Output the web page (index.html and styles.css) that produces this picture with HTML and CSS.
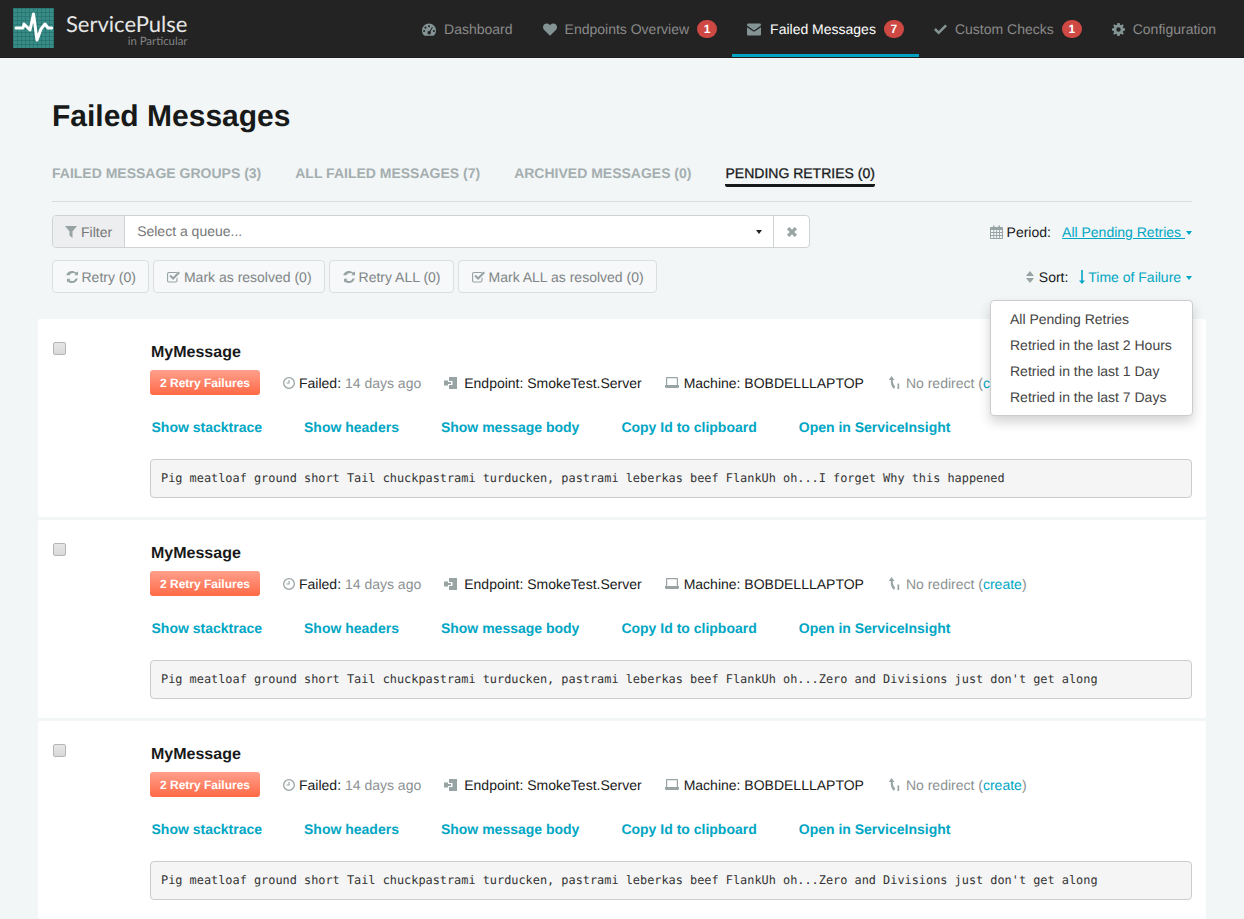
FILE: index.html
```html
<!DOCTYPE html>
<html>
<head>
    <meta name="viewport" content="width=device-width, initial-scale=1">
    <title>ServicePulse</title>
    <link rel="stylesheet" href="styles.css">
</head>
<body>
<svg class="defs" width="0" height="0">
    <symbol id="i-gauge" viewBox="0 0 16 14"><path fill-rule="evenodd" d="M8 0a8 8 0 0 0-8 8c0 2 .7 3.900 2 5.300.3.400.7.700 1.200.700h9.600c.5 0 .9-.3 1.200-.7 1.300-1.400 2-3.300 2-5.300a8 8 0 0 0-8-8zM8 2a1.200 1.200 0 1 1 0 2.400A1.200 1.200 0 0 1 8 2zM4 3.700a1.200 1.200 0 1 1 0 2.400 1.200 1.200 0 0 1 0-2.400zM2.400 7.500a1.200 1.200 0 1 1 0 2.400 1.200 1.200 0 0 1 0-2.400zM13.600 7.500a1.200 1.200 0 1 1 0 2.400 1.200 1.200 0 0 1 0-2.400zM11.400 4l1 .6-2.700 4.700a2 2 0 1 1-1-.6z"/></symbol>
    <symbol id="i-heart" viewBox="0 0 16 14"><path d="M8 14 1.300 7.500C-.4 5.800-.4 3 1.200 1.300 2.900-.4 5.600-.4 7.300 1.300l.7.700.7-.7c1.700-1.700 4.400-1.700 6.100 0 1.600 1.700 1.600 4.500-.1 6.200z"/></symbol>
    <symbol id="i-mail" viewBox="0 0 14 12"><path d="M1.300 0h11.400C13.400 0 14 .6 14 1.300c0 .5-.3 1-.7 1.300L7.700 6.400a1.200 1.200 0 0 1-1.400 0L.7 2.600C.3 2.300 0 1.800 0 1.300 0 .6.600 0 1.300 0zM0 3.700 6 7.800c.6.400 1.400.4 2 0l6-4.100v7c0 .7-.6 1.300-1.300 1.300H1.300C.6 12 0 11.400 0 10.700z"/></symbol>
    <symbol id="i-check" viewBox="0 0 14 11"><path d="M5 11 0 6l2-2 3 3 7-7 2 2z"/></symbol>
    <symbol id="i-cog" viewBox="0 0 14 14"><path fill-rule="evenodd" d="M5.800 0h2.400l.4 1.900 1.200.5L11.400 1.300l1.300 1.300-1.100 1.600.5 1.200L14 5.800v2.400l-1.900.4-.5 1.200 1.100 1.600-1.300 1.300-1.600-1.100-1.200.5L8.200 14H5.800l-.4-1.900-1.200-.5-1.600 1.100-1.300-1.300 1.100-1.600-.5-1.200L0 8.200V5.800l1.900-.4.500-1.200-1.100-1.600 1.300-1.300 1.600 1.100 1.200-.5zM7 4.600a2.400 2.400 0 1 0 0 4.800 2.400 2.400 0 0 0 0-4.800z"/></symbol>
    <symbol id="i-filter" viewBox="0 0 12 12"><path d="M0 0h12L7.500 5.500V12L4.500 9.500v-4z"/></symbol>
    <symbol id="i-times" viewBox="0 0 10 10"><path d="M2.200 0 5 2.800 7.800 0 10 2.200 7.200 5 10 7.800 7.800 10 5 7.200 2.200 10 0 7.800 2.800 5 0 2.200z"/></symbol>
    <symbol id="i-refresh" viewBox="0 0 12 12"><path d="M11.800 7.200C11.200 10 8.900 12 6 12c-1.500 0-3-.6-4-1.600L1 11.400V7.700h3.700L3.300 9.100c.7.600 1.700 1 2.700 1 1.500 0 2.800-.9 3.400-2.400zM12 .6v3.700H8.300l1.400-1.400C9 2.300 8 1.900 6.900 1.900c-1.500 0-3 .9-3.500 2.400H.2C.8 1.900 3.100 0 6 0c1.500 0 3 .6 4 1.600z"/></symbol>
    <symbol id="i-checkbox" viewBox="0 0 13 12"><path fill-rule="evenodd" d="M1.800 1h8c.3 0 .5 0 .7.100l-.8 1H2c-.5 0-.9.400-.9.900v6.500c0 .5.400.9.900.9h6.500c.5 0 .9-.4.900-.9V7.400l1.100-1.100v3.200c0 1.100-.9 2-2 2H1.800c-1 0-1.800-.9-1.800-2V3c0-1.100.8-2 1.800-2zM11.500.6 13 2 6.100 8.900 2.400 5.200l1.400-1.400 2.300 2.300z"/></symbol>
    <symbol id="i-calendar" viewBox="0 0 13 14"><path fill-rule="evenodd" d="M1 2h2V.5h1.500V2h4V.5H10V2h2c.6 0 1 .4 1 1v10c0 .6-.4 1-1 1H1c-.6 0-1-.4-1-1V3c0-.6.400-1 1-1zM1 5v2h2.300V5zm3.200 0v2h2V5zm2.900 0v2h2V5zm2.900 0v2H12V5zM1 8v2h2.300V8zm3.200 0v2h2V8zm2.900 0v2h2V8zm2.900 0v2H12V8zM1 11v2h2.300v-2zm3.200 0v2h2v-2zm2.900 0v2h2v-2zm2.900 0v2H12v-2z"/></symbol>
    <symbol id="i-sort" viewBox="0 0 8 12"><path d="M4 0l4 5H0zM0 7h8l-4 5z"/></symbol>
    <symbol id="i-down" viewBox="0 0 6 14"><path d="M2.200 0h1.600v10.500H6L3 14 0 10.500h2.200z"/></symbol>
    <symbol id="i-clock" viewBox="0 0 12 12"><path fill-rule="evenodd" d="M6 0a6 6 0 1 1 0 12A6 6 0 0 1 6 0zm0 1.300a4.700 4.700 0 1 0 0 9.400 4.700 4.700 0 0 0 0-9.400zM5.500 3h1.100v3.500H3.500V5.500h2z"/></symbol>
    <symbol id="i-endpoint" viewBox="0 0 13 12"><path d="M5 0h8v12H5V8h3.500V4H5zM0 3.500h4V5h3v2H4v1.500H0z"/></symbol>
    <symbol id="i-laptop" viewBox="0 0 14 11"><path fill-rule="evenodd" d="M2 0h10c.5 0 1 .5 1 1v7h1v1.500c0 .8-.6 1.500-1.300 1.500H1.300C.6 11 0 10.300 0 9.500V8h1V1c0-.5.500-1 1-1zm.2 1.200V8h9.600V1.200z"/></symbol>
    <symbol id="i-redirect" viewBox="0 0 12 14"><path d="M3.500 0 6.500 4H4.800c-.2 3 .8 5 2.400 6.500L6 13C3.500 11 2.600 8 2.800 4H.8zM9.500 7.500h1.700V13H9.500z"/></symbol>
</svg>

<header class="navbar">
    <a class="brand" href="#">
        <svg class="brand-mark" viewBox="0 0 41 40">
            <defs>
                <pattern id="grid" width="4" height="4" patternUnits="userSpaceOnUse">
                    <rect width="4" height="4" fill="#388c88"/>
                    <path d="M0 0h4M0 0v4" stroke="#1f6664" stroke-width="1"/>
                </pattern>
            </defs>
            <rect width="41" height="40" fill="url(#grid)"/>
            <path d="M3 20h7l1-4 6 6 3.500-16L24 32l4-11 4-5 3 4h3.700" fill="none" stroke="#fff" stroke-width="3" stroke-linejoin="round" stroke-linecap="round"/>
        </svg>
        <span class="brand-text">
            <span class="brand-name">ServicePulse</span>
            <span class="brand-sub">in Particular</span>
        </span>
    </a>
    <nav class="nav">
        <a class="nav-item" href="#"><svg class="nav-icon"><use href="#i-gauge"/></svg>Dashboard</a>
        <a class="nav-item" href="#"><svg class="nav-icon"><use href="#i-heart"/></svg>Endpoints Overview<span class="count">1</span></a>
        <a class="nav-item active" href="#"><svg class="nav-icon wide-gap"><use href="#i-mail"/></svg>Failed Messages<span class="count">7</span></a>
        <a class="nav-item" href="#"><svg class="nav-icon narrow"><use href="#i-check"/></svg>Custom Checks<span class="count">1</span></a>
        <a class="nav-item" href="#"><svg class="nav-icon narrow"><use href="#i-cog"/></svg>Configuration</a>
    </nav>
</header>

<main class="page">
    <h1>Failed Messages</h1>

    <div class="tabs">
        <a class="tab" href="#">Failed Message Groups (3)</a>
        <a class="tab" href="#">All Failed Messages (7)</a>
        <a class="tab" href="#">Archived Messages (0)</a>
        <a class="tab selected" href="#">Pending Retries (0)</a>
    </div>

    <div class="toolbar">
        <div class="filter">
            <span class="filter-label"><svg class="ico i12"><use href="#i-filter"/></svg>Filter</span>
            <span class="filter-select">Select a queue...<span class="caret dark"></span></span>
            <span class="filter-clear"><svg class="ico i10"><use href="#i-times"/></svg></span>
        </div>
        <div class="period">
            <svg class="ico calendar"><use href="#i-calendar"/></svg><span class="label period-label">Period:</span>
            <a class="period-link" href="#">All Pending Retries <span class="caret"></span></a>
        </div>
    </div>

    <div class="toolbar second">
        <div class="actions">
            <button class="btn"><svg class="ico i12"><use href="#i-refresh"/></svg>Retry (0)</button>
            <button class="btn"><svg class="ico i13"><use href="#i-checkbox"/></svg>Mark as resolved (0)</button>
            <button class="btn"><svg class="ico i12"><use href="#i-refresh"/></svg>Retry ALL (0)</button>
            <button class="btn"><svg class="ico i13"><use href="#i-checkbox"/></svg>Mark ALL as resolved (0)</button>
        </div>
        <div class="sort">
            <svg class="ico sort-ico"><use href="#i-sort"/></svg><span class="label">Sort:</span>
            <a class="sort-link" href="#"><svg class="down-ico"><use href="#i-down"/></svg>Time of Failure <span class="caret"></span></a>
        </div>
    </div>

    <ul class="menu">
        <li>All Pending Retries</li>
        <li>Retried in the last 2 Hours</li>
        <li>Retried in the last 1 Day</li>
        <li>Retried in the last 7 Days</li>
    </ul>

    <div class="messages">
        <div class="message">
            <input class="pick" type="checkbox">
            <div class="body">
                <div class="title">MyMessage</div>
                <div class="meta">
                    <span class="badge">2 Retry Failures</span>
                    <span class="meta-item"><svg class="ico i12"><use href="#i-clock"/></svg>Failed: <span class="muted">14 days ago</span></span>
                    <span class="meta-item"><svg class="ico endpoint"><use href="#i-endpoint"/></svg>Endpoint: SmokeTest.Server</span>
                    <span class="meta-item"><svg class="ico laptop"><use href="#i-laptop"/></svg>Machine: BOBDELLLAPTOP</span>
                    <span class="meta-item muted"><svg class="ico redirect"><use href="#i-redirect"/></svg>No redirect (<a href="#">create</a>)</span>
                </div>
                <div class="links">
                    <a href="#">Show stacktrace</a>
                    <a href="#">Show headers</a>
                    <a href="#">Show message body</a>
                    <a href="#">Copy Id to clipboard</a>
                    <a href="#">Open in ServiceInsight</a>
                </div>
                <pre class="reason">Pig meatloaf ground short Tail chuckpastrami turducken, pastrami leberkas beef FlankUh oh...I forget Why this happened</pre>
            </div>
        </div>
        <div class="message">
            <input class="pick" type="checkbox">
            <div class="body">
                <div class="title">MyMessage</div>
                <div class="meta">
                    <span class="badge">2 Retry Failures</span>
                    <span class="meta-item"><svg class="ico i12"><use href="#i-clock"/></svg>Failed: <span class="muted">14 days ago</span></span>
                    <span class="meta-item"><svg class="ico endpoint"><use href="#i-endpoint"/></svg>Endpoint: SmokeTest.Server</span>
                    <span class="meta-item"><svg class="ico laptop"><use href="#i-laptop"/></svg>Machine: BOBDELLLAPTOP</span>
                    <span class="meta-item muted"><svg class="ico redirect"><use href="#i-redirect"/></svg>No redirect (<a href="#">create</a>)</span>
                </div>
                <div class="links">
                    <a href="#">Show stacktrace</a>
                    <a href="#">Show headers</a>
                    <a href="#">Show message body</a>
                    <a href="#">Copy Id to clipboard</a>
                    <a href="#">Open in ServiceInsight</a>
                </div>
                <pre class="reason">Pig meatloaf ground short Tail chuckpastrami turducken, pastrami leberkas beef FlankUh oh...Zero and Divisions just don't get along</pre>
            </div>
        </div>
        <div class="message">
            <input class="pick" type="checkbox">
            <div class="body">
                <div class="title">MyMessage</div>
                <div class="meta">
                    <span class="badge">2 Retry Failures</span>
                    <span class="meta-item"><svg class="ico i12"><use href="#i-clock"/></svg>Failed: <span class="muted">14 days ago</span></span>
                    <span class="meta-item"><svg class="ico endpoint"><use href="#i-endpoint"/></svg>Endpoint: SmokeTest.Server</span>
                    <span class="meta-item"><svg class="ico laptop"><use href="#i-laptop"/></svg>Machine: BOBDELLLAPTOP</span>
                    <span class="meta-item muted"><svg class="ico redirect"><use href="#i-redirect"/></svg>No redirect (<a href="#">create</a>)</span>
                </div>
                <div class="links">
                    <a href="#">Show stacktrace</a>
                    <a href="#">Show headers</a>
                    <a href="#">Show message body</a>
                    <a href="#">Copy Id to clipboard</a>
                    <a href="#">Open in ServiceInsight</a>
                </div>
                <pre class="reason">Pig meatloaf ground short Tail chuckpastrami turducken, pastrami leberkas beef FlankUh oh...Zero and Divisions just don't get along</pre>
            </div>
        </div>
    </div>
</main>
</body>
</html>
```

FILE: styles.css
```css
* {
    box-sizing: border-box;
}

html, body {
    height: 919px;
    overflow: hidden;
}

body {
    margin: 0;
    background-color: #f2f6f7;
    color: #181919;
    font-family: "Liberation Sans", Arial, sans-serif;
    font-size: 14px;
    text-rendering: geometricPrecision;
}

a {
    color: #00a6c4;
    text-decoration: none;
}

.defs {
    position: absolute;
}

/* top bar */
.navbar {
    display: flex;
    justify-content: space-between;
    height: 58px;
    background-color: #232323;
    border-bottom: 1px solid #1c1c1c;
}

.brand {
    display: flex;
    margin: 8px 0 0 13px;
}

.brand-mark {
    width: 41px;
    height: 40px;
}

.brand-text {
    display: flex;
    flex-direction: column;
    margin-left: 12px;
    font-family: Lato, sans-serif;
    text-align: right;
}

.brand-name {
    margin-top: 4px;
    color: #e6e6e6;
    font-size: 22px;
    line-height: 24px;
}

.brand-sub {
    color: #858585;
    font-size: 11.4px;
    line-height: 11px;
}

.nav {
    display: flex;
    padding-right: 13px;
}

.nav-item {
    display: flex;
    align-items: center;
    height: 57px;
    padding: 4px 15px 0;
    border-bottom: 3px solid transparent;
    color: #8a8a8a;
}

.nav-item.active {
    border-bottom-color: #00a3c4;
    color: #fff;
}

.nav-icon {
    width: 14px;
    height: 13px;
    margin-right: 8px;
    fill: #849495;
}

.nav-icon.narrow {
    width: 13px;
}

.nav-icon.wide-gap {
    margin-right: 9px;
}

.count {
    margin-left: 8px;
    width: 20px;
    height: 18px;
    border-radius: 9px;
    background-color: #ce4844;
    color: #fff;
    font-size: 12px;
    font-weight: bold;
    line-height: 18px;
    text-align: center;
}

/* page */
.page {
    position: relative;
    width: 1168px;
    margin-left: 38px;
}

h1 {
    margin: 0;
    padding: 41px 14px 0;
    font-size: 30px;
    font-weight: bold;
    line-height: 36px;
}

.tabs {
    display: flex;
    gap: 34px;
    height: 47px;
    margin: 20px 14px 0;
    padding-top: 8px;
    border-bottom: 1px solid #d9dfe0;
}

.tab {
    height: 24px;
    color: #a5aeaf;
    font-weight: bold;
    line-height: 20px;
    text-transform: uppercase;
}

.tab.selected {
    border-bottom: 3px solid #181919;
    border-radius: 0 0 2px 2px;
    color: #181919;
    font-weight: normal;
    -webkit-text-stroke: 0.3px #181919;
}

.toolbar {
    display: flex;
    justify-content: space-between;
    align-items: center;
    margin: 13px 14px 0;
    height: 33px;
}

.toolbar.second {
    margin-top: 12px;
}

.ico {
    flex: none;
    margin-right: 4px;
    fill: #98a3a4;
    vertical-align: -1px;
}

.i10 {
    width: 10px;
    height: 10px;
}

.i12 {
    width: 12px;
    height: 12px;
}

.i13 {
    width: 13px;
    height: 12px;
}

.calendar {
    width: 13px;
    height: 14px;
    vertical-align: -2px;
}

.filter {
    display: flex;
    width: 758px;
    height: 33px;
    border: 1px solid #cfd3d4;
    border-radius: 4px;
    background-color: #fff;
    color: #777;
}

.filter-label {
    display: flex;
    align-items: center;
    padding: 0 12px;
    border-right: 1px solid #cfd3d4;
    border-radius: 3px 0 0 3px;
    background-color: #eceeef;
}

.filter-select {
    position: relative;
    flex: 1;
    padding-left: 12px;
    border-right: 1px solid #cfd3d4;
    line-height: 31px;
}

.filter-clear {
    display: flex;
    justify-content: center;
    align-items: center;
    width: 35px;
}

.filter-clear .ico {
    margin: 0;
}

.caret {
    display: inline-block;
    width: 0;
    height: 0;
    margin-left: 1px;
    border-top: 4px solid #00a6c4;
    border-left: 3.5px solid transparent;
    border-right: 3.5px solid transparent;
    vertical-align: 2px;
}

.caret.dark {
    position: absolute;
    top: 14px;
    right: 11px;
    border-top-color: #222;
}

.label {
    margin-right: 7px;
}

.period-label {
    margin-right: 8px;
}

.period-link {
    text-decoration: underline;
}

.actions {
    display: flex;
    gap: 4px;
}

.btn {
    height: 33px;
    padding: 0 12.5px;
    border: 1px solid #dcdfe0;
    border-radius: 4px;
    background-color: #f6f8f9;
    color: #7f8586;
    font-family: inherit;
    font-size: 14px;
    text-rendering: geometricPrecision;
}

.sort-ico {
    width: 8px;
    height: 12px;
    margin-right: 5px;
}

.down-ico {
    width: 6px;
    height: 14px;
    margin-right: 3px;
    fill: #00a6c4;
    vertical-align: -2px;
}

.menu {
    position: absolute;
    top: 242px;
    left: 952px;
    width: 203px;
    margin: 0;
    padding: 5px 0 5px;
    border: 1px solid #ccc;
    border-radius: 4px;
    background-color: #fff;
    box-shadow: 0 6px 12px rgba(0, 0, 0, 0.175);
    color: #444;
    list-style: none;
    z-index: 10;
}

.menu li {
    padding-left: 19px;
    line-height: 26px;
    white-space: nowrap;
}

/* message list */
.messages {
    margin-top: 26px;
}

.message {
    display: flex;
    height: 198px;
    margin-bottom: 3px;
    padding: 23px 14px 0 15px;
    border-radius: 2px;
    background-color: #fff;
}

.pick {
    flex: none;
    width: 13px;
    height: 13px;
    margin: 0 84px 0 0;
    appearance: none;
    border: 1px solid #b5b5b5;
    border-radius: 2px;
    background: linear-gradient(#e6e6e6, #d9d9d9);
}

.body {
    flex: 1;
}

.title {
    margin: 2px 0 0 1px;
    font-size: 16px;
    font-weight: bold;
    line-height: 18px;
}

.meta {
    display: flex;
    align-items: center;
    gap: 23px;
    margin-top: 8px;
    height: 25px;
    white-space: nowrap;
}

.badge {
    width: 110px;
    height: 25px;
    border-radius: 3px;
    background: linear-gradient(#ff9f8c, #ff6a46);
    color: #fff;
    font-size: 12px;
    font-weight: bold;
    line-height: 26px;
    text-align: center;
}

.muted {
    color: #8b9192;
}

.endpoint {
    width: 13px;
    height: 12px;
    margin-right: 7px;
}

.laptop {
    width: 14px;
    height: 13px;
    margin-right: 5px;
}

.redirect {
    width: 12px;
    height: 14px;
    margin: 0 6px 0 1px;
    vertical-align: -2px;
}

.links {
    display: flex;
    gap: 42px;
    margin: 23px 0 0 1.5px;
    font-weight: bold;
    line-height: 18px;
}

.reason {
    height: 39px;
    margin: 23px 0 0;
    padding: 0 10px;
    border: 1px solid #ccc;
    border-radius: 4px;
    background-color: #f5f5f5;
    color: #333;
    font-family: "DejaVu Sans Mono", monospace;
    font-size: 11.89px;
    line-height: 37px;
}
```
